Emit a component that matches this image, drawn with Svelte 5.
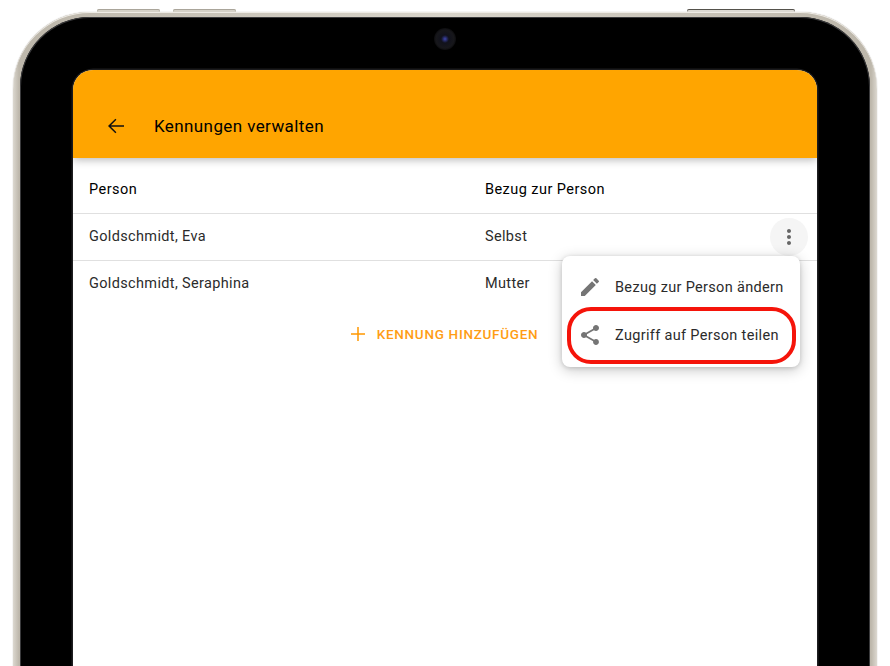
<script>
  const rows = [
    { name: 'Goldschmidt, Eva', relation: 'Selbst', active: true },
    { name: 'Goldschmidt, Seraphina', relation: 'Mutter', active: false }
  ];
</script>

<div class="page">
  <div class="device">
    <span class="hw-btn vol-a"></span>
    <span class="hw-btn vol-b"></span>
    <span class="hw-btn power"></span>
    <span class="camera"></span>

    <div class="bezel">
      <div class="screen">
        <header class="toolbar">
          <svg class="back" viewBox="0 0 24 24" width="24" height="24">
            <path d="M20 11.25H6.9l5.5-5.6-1-1L4 12l7.4 7.35 1-1-5.5-5.6H20v-1.5z" />
          </svg>
          <h1>Kennungen verwalten</h1>
        </header>

        <div class="table">
          <div class="row head">
            <div>Person</div>
            <div>Bezug zur Person</div>
          </div>
          {#each rows as row}
            <div class="row">
              <div class="cell">{row.name}</div>
              <div class="cell">{row.relation}</div>
              {#if row.active}
                <button class="kebab" aria-label="Menü">
                  <svg viewBox="0 0 24 24" width="24" height="24">
                    <path d="M12 8c1.1 0 2-.9 2-2s-.9-2-2-2-2 .9-2 2 .9 2 2 2zm0 2c-1.1 0-2 .9-2 2s.9 2 2 2 2-.9 2-2-.9-2-2-2zm0 6c-1.1 0-2 .9-2 2s.9 2 2 2 2-.9 2-2-.9-2-2-2z" />
                  </svg>
                </button>
              {/if}
            </div>
          {/each}
        </div>

        <button class="add">
          <svg viewBox="0 0 24 24" width="24" height="24">
            <path d="M19 12.75h-6.25V19h-1.5v-6.25H5v-1.5h6.25V5h1.5v6.25H19v1.5z" />
          </svg>
          <span>Kennung hinzufügen</span>
        </button>

        <div class="menu">
          <div class="menu-item">
            <svg viewBox="0 0 24 24" width="24" height="24">
              <path d="M3 17.25V21h3.75L17.81 9.94l-3.75-3.75L3 17.25zM20.71 7.04a1 1 0 0 0 0-1.41l-2.34-2.34a1 1 0 0 0-1.41 0l-1.83 1.83 3.75 3.75 1.83-1.83z" />
            </svg>
            <span>Bezug zur Person ändern</span>
          </div>
          <div class="menu-item">
            <svg viewBox="0 0 24 24" width="24" height="24">
              <path d="M18 16.08c-.76 0-1.44.3-1.96.77L8.91 12.7c.05-.23.09-.46.09-.7s-.04-.47-.09-.7l7.05-4.11c.54.5 1.25.81 2.04.81 1.66 0 3-1.34 3-3s-1.34-3-3-3-3 1.34-3 3c0 .24.04.47.09.7L8.04 9.81C7.5 9.31 6.79 9 6 9c-1.66 0-3 1.34-3 3s1.34 3 3 3c.79 0 1.5-.31 2.04-.81l7.12 4.16c-.05.21-.08.43-.08.65 0 1.61 1.31 2.92 2.92 2.92s2.92-1.31 2.92-2.92-1.31-2.92-2.92-2.92z" />
            </svg>
            <span>Zugriff auf Person teilen</span>
          </div>
          <span class="highlight"></span>
        </div>
      </div>
    </div>
  </div>
</div>

<style>
  :global(body) {
    margin: 0;
    background: #fff;
  }

  .page {
    height: 666px;
    overflow: hidden;
    padding: 12px 13px 0;
    box-sizing: border-box;
    font-family: Roboto, "Liberation Sans", sans-serif;
  }

  .device {
    position: relative;
    width: 864px;
    height: 760px;
    box-sizing: border-box;
    padding: 5px 7px 0;
    border-radius: 77px;
    background: linear-gradient(90deg, #dcd8d0 0, #bdb7ab 6px, #d8d4ca 50%, #bdb7ab calc(100% - 6px), #dcd8d0 100%);
    box-shadow: inset 0 1px 0 #eeebe5, 0 0 1px rgba(90, 85, 75, 0.6);
  }

  .hw-btn {
    position: absolute;
    top: -3px;
    height: 3px;
    border-radius: 2px 2px 0 0;
    background: #d6d2c8;
    box-shadow: inset 0 1px 0 #aaa59a;
  }

  .vol-a {
    left: 84px;
    width: 63px;
  }

  .vol-b {
    left: 160px;
    width: 63px;
  }

  .power {
    left: 674px;
    width: 108px;
    background: #dedbd4;
    box-shadow: inset 0 1px 0 #55524c;
  }

  .camera {
    position: absolute;
    left: 421px;
    top: 16px;
    width: 22px;
    height: 22px;
    border-radius: 50%;
    background: radial-gradient(circle, #3f46b0 0, #20234f 2.5px, #11121c 4px, #17171b 9px, #0c0c0e 11px);
    z-index: 1;
  }

  .bezel {
    height: 100%;
    box-sizing: border-box;
    padding: 53px 53px 0 53px;
    background: #000;
    border-radius: 70px;
    box-shadow: inset 0 0 0 1px #3a3a3c;
  }

  .screen {
    position: relative;
    height: 100%;
    background: #fff;
    border-radius: 20px 20px 0 0;
    box-shadow: 0 0 0 1.5px #1e1e20;
    color: #212121;
  }

  .toolbar {
    height: 88px;
    box-sizing: border-box;
    padding: 24px 0 0 31px;
    display: flex;
    align-items: center;
    gap: 26px;
    background: #ffa500;
    border-radius: 20px 20px 0 0;
    box-shadow: 0 2px 8px rgba(0, 0, 0, 0.28);
    position: relative;
  }

  .toolbar h1 {
    margin: 0;
    font-size: 17px;
    font-weight: 400;
    letter-spacing: 0.4px;
    color: #000;
  }

  .back {
    fill: #111;
  }

  .row {
    display: grid;
    grid-template-columns: 396px 1fr auto;
    align-items: center;
    height: 46px;
    padding: 0 9px 0 16px;
    border-bottom: 1px solid #e0e0e0;
    font-size: 14.5px;
    letter-spacing: 0.35px;
    color: #2b2b2b;
  }

  .cell {
    margin-bottom: 1px;
  }

  .row:last-child {
    border-bottom: 0;
  }

  .row.head {
    padding-top: 8px;
    height: 47px;
    font-weight: 400;
    letter-spacing: 0.45px;
    color: #000;
  }

  .kebab {
    width: 38px;
    height: 38px;
    padding: 0;
    border: 0;
    border-radius: 50%;
    background: #f5f5f5;
    display: flex;
    align-items: center;
    justify-content: center;
    fill: #666;
  }

  .add {
    display: flex;
    align-items: center;
    justify-content: center;
    gap: 7px;
    width: 100%;
    height: 36px;
    margin-top: 9px;
    padding: 0 6px 0 0;
    border: 0;
    background: none;
    font: 500 13.5px Roboto, "Liberation Sans", sans-serif;
    letter-spacing: 0.7px;
    text-transform: uppercase;
    color: #ff9d14;
    fill: #ff9800;
  }

  .menu {
    position: absolute;
    left: 489px;
    top: 186px;
    width: 238px;
    box-sizing: border-box;
    padding: 7px 0 8px;
    background: #fff;
    border-radius: 8px;
    box-shadow: 0 3px 14px rgba(0, 0, 0, 0.22), 0 1px 4px rgba(0, 0, 0, 0.14);
  }

  .menu-item {
    display: flex;
    align-items: center;
    gap: 13px;
    height: 48px;
    padding: 0 16px;
    font-size: 14.5px;
    letter-spacing: 0.33px;
    white-space: nowrap;
    color: #2b2b2b;
    fill: #757575;
  }

  .highlight {
    position: absolute;
    left: 5px;
    top: 51px;
    width: 229px;
    height: 57px;
    box-sizing: border-box;
    border: 4px solid #f5140a;
    border-radius: 24px;
  }
</style>
